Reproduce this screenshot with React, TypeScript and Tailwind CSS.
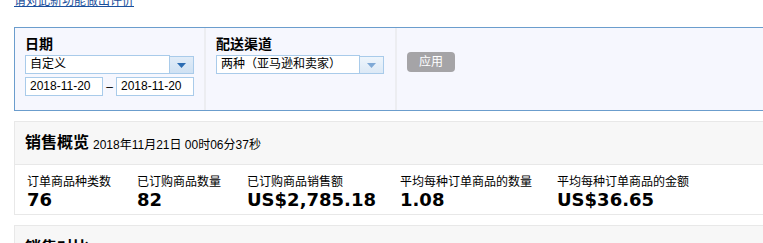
import React from "react";

const cjk = { fontFamily: '"Liberation Sans", "Noto Sans CJK SC", sans-serif' };
const num = { fontFamily: '"DejaVu Sans", "Noto Sans CJK SC", sans-serif' };

function Arrow({ light }: { light?: boolean }) {
  return (
    <svg width="9" height="5" viewBox="0 0 9 5">
      <polygon points="0,0 9,0 4.5,5" fill={light ? "#7fa9d6" : "#2b6cb3"} />
    </svg>
  );
}

function Select({ text, width, light }: { text: string; width: string; light?: boolean }) {
  return (
    <div className={`flex h-[19px] ${width}`}>
      <div className="flex-1 h-[19px] border border-[#a9cbea] bg-white pl-[4px] text-[12px] leading-[17px] text-black">
        {text}
      </div>
      <div
        className={`w-[24px] h-[18px] mt-[1px] flex items-center justify-center border border-[#a9cbea] border-l-0 ${
          light ? "bg-gradient-to-b from-[#eef5fc] to-[#dce9f6]" : "bg-gradient-to-b from-[#e1ecf8] to-[#cfe1f3]"
        }`}
      >
        <Arrow light={light} />
      </div>
    </div>
  );
}

const stats = [
  { label: "订单商品种类数", value: "76", w: "w-[110px]" },
  { label: "已订购商品数量", value: "82", w: "w-[110px]" },
  { label: "已订购商品销售额", value: "US$2,785.18", w: "w-[153px]" },
  { label: "平均每种订单商品的数量", value: "1.08", w: "w-[157px]" },
  { label: "平均每种订单商品的金额", value: "US$36.65", w: "w-[160px]" },
];

export default function App() {
  return (
    <div className="w-[763px] h-[243px] overflow-hidden bg-white" style={cjk}>
      <div className="w-[820px] pl-[14px]">
        <div className="h-[27px] flex items-start">
          <a className="block -mt-[6px] text-[12px] leading-[14px] text-[#1a4f9c] underline" href="#">
            请对此新功能做出评价
          </a>
        </div>
        <div className="flex h-[84px] border-y border-l border-[#6b9dcd] bg-[#f6f7fe]">
          <div className="w-[191px] border-r-2 border-[#ecedf1] pl-[10px] pt-[7px]">
            <div className="text-[14px] leading-[18px] font-bold text-black">日期</div>
            <div className="mt-[2px]">
              <Select text="自定义" width="w-[169px]" />
            </div>
            <div className="mt-[3px] flex items-center">
              <div className="w-[78px] h-[19px] border border-[#a9cbea] bg-white pl-[4px] text-[12px] leading-[17px] text-black">
                2018-11-20
              </div>
              <div className="w-[13px] text-center text-[12px] text-black">–</div>
              <div className="w-[78px] h-[19px] border border-[#a9cbea] bg-white pl-[4px] text-[12px] leading-[17px] text-black">
                2018-11-20
              </div>
            </div>
          </div>
          <div className="w-[191px] border-r-2 border-[#ecedf1] pl-[10px] pt-[7px]">
            <div className="text-[14px] leading-[18px] font-bold text-black">配送渠道</div>
            <div className="mt-[2px]">
              <Select text="两种（亚马逊和卖家）" width="w-[168px]" light />
            </div>
          </div>
          <div className="flex-1 pl-[10px] pt-[21px]">
            <button className="w-[48px] h-[20px] rounded-[4px] bg-[#a5a4a7] text-white text-[12px] leading-[20px]">
              应用
            </button>
          </div>
        </div>

        <div className="mt-[10px] border border-[#e8e8e8]">
          <div className="h-[43px] bg-[#f7f7f7] border-b border-[#e8e8e8] pl-[10px] flex items-center">
            <span className="text-[16px] font-bold text-black leading-[20px]">销售概览</span>
            <span className="ml-[4px] mt-[3px] text-[12px] text-black">2018年11月21日 00时06分37秒</span>
          </div>
          <div className="h-[49px] bg-white flex pl-[12px] pt-[9px]">
            {stats.map((s) => (
              <div key={s.label} className={s.w}>
                <div className="text-[12px] leading-[16px] text-black">{s.label}</div>
                <div className="text-[18px] leading-[20px] font-bold text-black" style={num}>
                  {s.value}
                </div>
              </div>
            ))}
          </div>
        </div>

        <div className="mt-[10px] border border-[#e8e8e8] bg-[#f7f7f7] h-[40px] pl-[10px] pt-[10px]">
          <span className="text-[16px] font-bold text-black leading-[20px]">销售对比</span>
        </div>
      </div>
    </div>
  );
}
